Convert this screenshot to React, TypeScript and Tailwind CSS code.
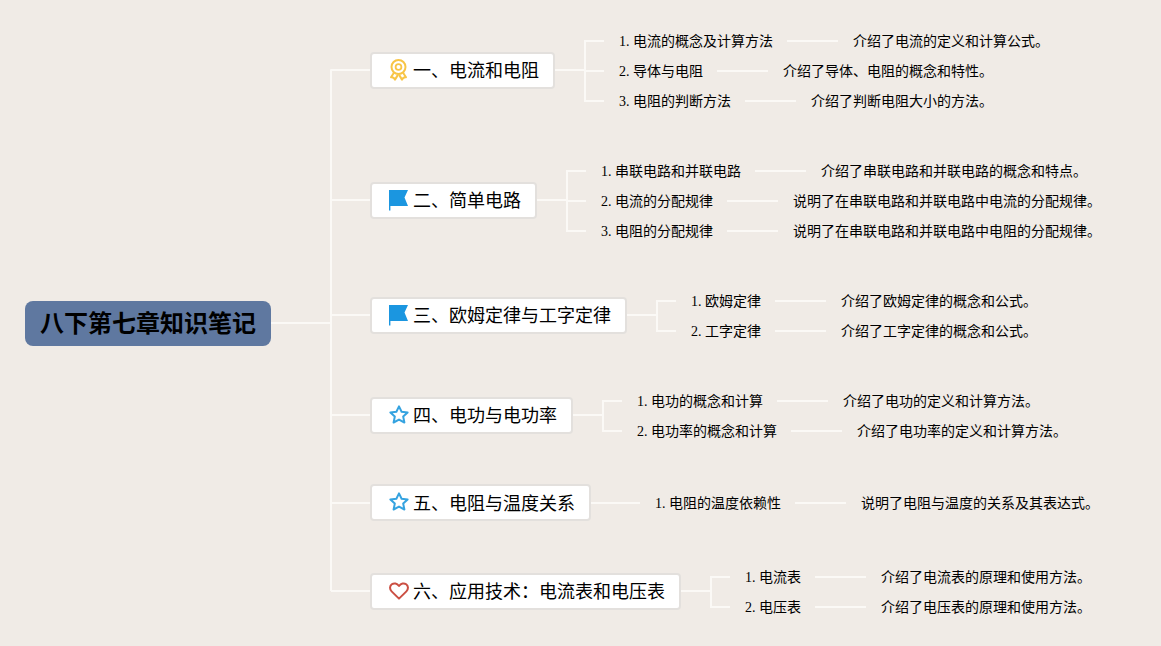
const fontStack = "font-['Liberation_Serif','Noto_Sans_CJK_SC',serif]";

const MedalIcon = () => (
    <svg width="20" height="22" viewBox="0 0 20 22" fill="none" stroke="#f8c546" strokeWidth="2" strokeLinejoin="round" strokeLinecap="round">
        <circle cx="9.5" cy="8" r="7" />
        <circle cx="9.5" cy="8" r="2.9" strokeWidth="1.8" />
        <path d="M4.8 14 L2 18.2 C3.8 18 5.2 18.8 6 20.6 L8.6 16.4" />
        <path d="M14.2 14 L17 18.2 C15.2 18 13.8 18.8 13 20.6 L10.4 16.4" />
    </svg>
);

const FlagIcon = () => (
    <svg width="20" height="22" viewBox="0 0 20 22">
        <path d="M0 1 H19 L15.5 8.5 L19 17 H1.4 V21.5 H0 Z" fill="#1b96e0" />
    </svg>
);

const StarIcon = () => (
    <svg className="-mt-[2px]" width="20" height="19" viewBox="0 0 20 19" fill="none" stroke="#35a3e0" strokeWidth="2" strokeLinejoin="round">
        <path d="M10 1.4 L12.6 6.7 L18.6 7.5 L14.2 11.6 L15.4 17.5 L10 14.6 L4.6 17.5 L5.8 11.6 L1.4 7.5 L7.4 6.7 Z" />
    </svg>
);

const HeartIcon = () => (
    <svg width="20" height="18" viewBox="0 0 20 18" fill="none" stroke="#cb4f43" strokeWidth="2" strokeLinejoin="round">
        <path d="M10 16.6 L2.6 9.4 C0.4 7.2 0.6 4 2.8 2.3 C5 0.7 8 1.2 10 4 C12 1.2 15 0.7 17.2 2.3 C19.4 4 19.6 7.2 17.4 9.4 Z" />
    </svg>
);

const Row = ({ title, desc, single }: { title: string; desc: string; single: boolean }) => (
    <div className="flex h-[30px] items-center">
        <div className="h-[2px] w-[20px] bg-[#fbf9f6]" />
        <span className={single ? "mt-[2px] ml-[15px] text-[14px] whitespace-nowrap text-black" : "ml-[15px] text-[14px] whitespace-nowrap text-black"}>{title}</span>
        <div className="ml-[14px] h-[2px] w-[51px] bg-[#fbf9f6]" />
        <span className={single ? "mt-[2px] ml-[15px] text-[14px] whitespace-nowrap text-black" : "ml-[15px] text-[14px] whitespace-nowrap text-black"}>{desc}</span>
    </div>
);

const Branch = ({ className, icon, title, rows }: {
    className: string;
    icon: React.ReactNode;
    title: string;
    rows: { title: string; desc: string }[];
}) => (
    <div className={`absolute left-[331px] flex items-center ${className}`}>
        <div className="h-[2px] w-[39px] bg-[#fbf9f6]" />
        <div className="flex h-[37px] items-center rounded-[4px] border-2 border-[#e3e0dd] bg-white pr-[14px] pl-[17px]">
            <div className="flex w-[24px] items-center">{icon}</div>
            <span className="mt-[3px] text-[18px] whitespace-nowrap text-black">{title}</span>
        </div>
        <div className="h-[2px] w-[29px] bg-[#fbf9f6]" />
        <div className={rows.length > 1 ? "relative flex flex-col pt-[2px]" : "relative flex flex-col"}>
            {rows.length > 1 && (
                <div className="absolute top-[16px] bottom-[14px] left-0 w-[2px] rounded-t bg-[#fbf9f6]" />
            )}
            {rows.map((row) => (
                <Row key={row.title} title={row.title} desc={row.desc} single={rows.length === 1} />
            ))}
        </div>
    </div>
);

const App = () => {
    return (
        <div className={`relative h-[646px] w-[1161px] overflow-hidden bg-[#f0ebe6] ${fontStack}`}>
            {/* trunk */}
            <div className="absolute top-[69px] left-[330px] h-[522px] w-[2px] rounded-t bg-[#fbf9f6]" />
            <div className="absolute top-[322px] left-[271px] h-[2px] w-[60px] bg-[#fbf9f6]" />

            <div className="absolute top-[301px] left-[25px] flex h-[45px] w-[246px] items-center justify-center rounded-[8px] bg-[#5f78a0]">
                <span className="text-[24px] font-bold whitespace-nowrap text-black">八下第七章知识笔记</span>
            </div>

            <Branch
                className="top-[24px]"
                icon={<MedalIcon />}
                title="一、电流和电阻"
                rows={[
                    { title: "1. 电流的概念及计算方法", desc: "介绍了电流的定义和计算公式。" },
                    { title: "2. 导体与电阻", desc: "介绍了导体、电阻的概念和特性。" },
                    { title: "3. 电阻的判断方法", desc: "介绍了判断电阻大小的方法。" },
                ]}
            />
            <Branch
                className="top-[154px]"
                icon={<FlagIcon />}
                title="二、简单电路"
                rows={[
                    { title: "1. 串联电路和并联电路", desc: "介绍了串联电路和并联电路的概念和特点。" },
                    { title: "2. 电流的分配规律", desc: "说明了在串联电路和并联电路中电流的分配规律。" },
                    { title: "3. 电阻的分配规律", desc: "说明了在串联电路和并联电路中电阻的分配规律。" },
                ]}
            />
            <Branch
                className="top-[284px]"
                icon={<FlagIcon />}
                title="三、欧姆定律与工字定律"
                rows={[
                    { title: "1. 欧姆定律", desc: "介绍了欧姆定律的概念和公式。" },
                    { title: "2. 工字定律", desc: "介绍了工字定律的概念和公式。" },
                ]}
            />
            <Branch
                className="top-[384px]"
                icon={<StarIcon />}
                title="四、电功与电功率"
                rows={[
                    { title: "1. 电功的概念和计算", desc: "介绍了电功的定义和计算方法。" },
                    { title: "2. 电功率的概念和计算", desc: "介绍了电功率的定义和计算方法。" },
                ]}
            />
            <Branch
                className="top-[484px]"
                icon={<StarIcon />}
                title="五、电阻与温度关系"
                rows={[{ title: "1. 电阻的温度依赖性", desc: "说明了电阻与温度的关系及其表达式。" }]}
            />
            <Branch
                className="top-[560px]"
                icon={<HeartIcon />}
                title="六、应用技术：电流表和电压表"
                rows={[
                    { title: "1. 电流表", desc: "介绍了电流表的原理和使用方法。" },
                    { title: "2. 电压表", desc: "介绍了电压表的原理和使用方法。" },
                ]}
            />
        </div>
    );
};

export default App;
